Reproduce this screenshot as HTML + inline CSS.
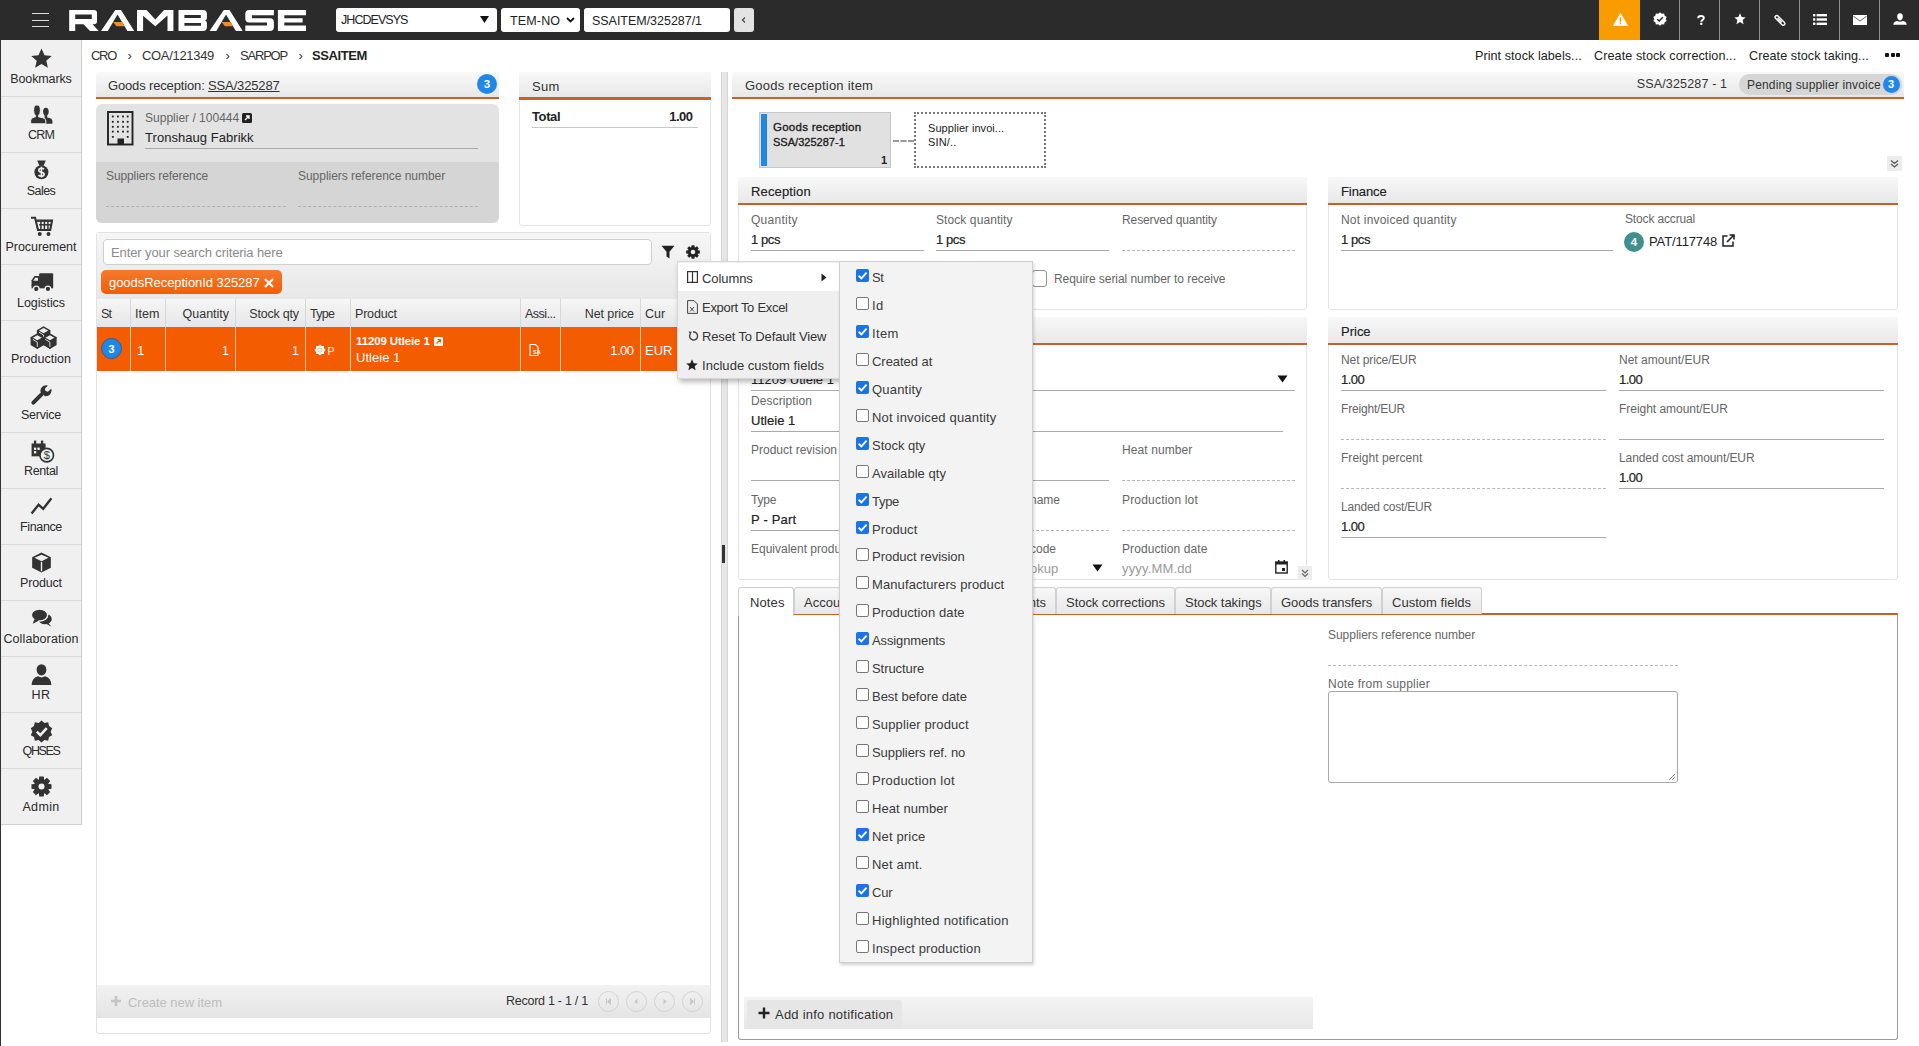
<!DOCTYPE html><html><head><meta charset="utf-8"><style>
html,body{margin:0;padding:0;width:1919px;height:1046px;overflow:hidden;background:#fff;font-family:"Liberation Sans",sans-serif;}
.a{position:absolute;box-sizing:border-box;}
.t{position:absolute;white-space:nowrap;}
svg.a{overflow:visible;}
</style></head><body>
<div class="a" style="left:0px;top:0px;width:1919px;height:40px;background:#2b2b2b;"></div>
<div class="a" style="left:32px;top:13px;width:17px;height:1.4px;background:#dcdcdc;"></div>
<div class="a" style="left:32px;top:19.5px;width:17px;height:1.4px;background:#dcdcdc;"></div>
<div class="a" style="left:32px;top:26px;width:17px;height:1.4px;background:#dcdcdc;"></div>
<svg class="a" style="left:0px;top:0px;" width="320" height="40" viewBox="0 0 320 40"><g fill="#fff" fill-rule="evenodd">
<path d="M69.2,31 V10 H94 Q97,10 97,13 V21 Q97,24.3 94,24.3 H92.5 L98.7,31 H90 L83.5,24.3 H75.2 V31 Z M75.2,14.6 H91.8 V18.9 H75.2 Z"/>
<path d="M101,31 L115.3,10 H121 L134.2,31 H127.4 L117.5,14.6 L107.8,31 Z"/>
<path d="M137,31 V10 H146.5 L155.3,19.5 L164,10 H173.4 V31 H167.5 V15.5 L155.3,26.2 L143.1,15.8 V31 Z"/>
<path d="M178.5,10 H203 Q206.9,10 206.9,14 V17.5 Q206.9,20.5 204.5,20.5 Q206.9,20.5 206.9,23.5 V27 Q206.9,31 203,31 H178.5 Z M184.4,15.1 H200.8 V18 H184.4 Z M184.4,23.1 H201 V25.7 H184.4 Z"/>
<path d="M209.5,31 L223.8,10 H229.5 L242.7,31 H235.9 L226,14.6 L216.3,31 Z"/>
<path d="M273.9,10 V15.2 H251.9 V18.3 H270 Q273.9,18.3 273.9,22.3 V27 Q273.9,31 270,31 H245.3 V25.6 H267 V22.6 H249.3 Q245.3,22.6 245.3,18.6 V14 Q245.3,10 249.3,10 Z"/>
<path d="M277.9,10 H306 V15.2 H284.3 V18.3 H302.6 V22.6 H284.3 V25.6 H306 V31 H277.9 Z"/>
</g>
<path d="M113.1,22 H122 L124.6,26.3 H116.4 Z" fill="#f08b2a"/>
<path d="M221.6,22 H230.5 L233.1,26.3 H224.9 Z" fill="#f08b2a"/>
</svg>
<div class="a" style="left:336px;top:8px;width:161px;height:24px;background:#fff;border-radius:3px;"></div>
<div class="t" style="left:341.0px;top:14.4px;font-size:12.5px;line-height:12.5px;color:#222;font-weight:normal;letter-spacing:-0.946px;">JHCDEVSYS</div>
<svg class="a" style="left:480px;top:16px;" width="9" height="7" viewBox="0 0 9 7"><path d="M0,0 H9 L4.5,7 Z" fill="#111"/></svg>
<div class="a" style="left:501px;top:8px;width:79px;height:24px;background:#fff;border-radius:3px;"></div>
<div class="t" style="left:510.0px;top:14.9px;font-size:12.5px;line-height:12.5px;color:#222;font-weight:normal;letter-spacing:0.151px;">TEM-NO</div>
<svg class="a" style="left:566px;top:17px;" width="9" height="6" viewBox="0 0 9 6"><path d="M1,1 L4.5,4.5 L8,1" fill="none" stroke="#111" stroke-width="1.8"/></svg>
<div class="a" style="left:584px;top:8px;width:146px;height:24px;background:#fff;border-radius:3px;"></div>
<div class="t" style="left:592.0px;top:14.9px;font-size:12.5px;line-height:12.5px;color:#222;font-weight:normal;letter-spacing:-0.028px;">SSAITEM/325287/1</div>
<div class="a" style="left:734px;top:8px;width:20px;height:24px;background:#e3e3e3;border-radius:3px;"></div>
<svg class="a" style="left:741px;top:17px;" width="6" height="6" viewBox="0 0 6 6"><path d="M4,0.5 L1.5,3 L4,5.5" fill="none" stroke="#444" stroke-width="1.2"/></svg>
<div class="a" style="left:1599px;top:0px;width:41px;height:40px;background:#f89c00;"></div>
<div class="a" style="left:1679px;top:0px;width:1px;height:40px;background:#8f8f8f;"></div>
<div class="a" style="left:1719px;top:0px;width:1px;height:40px;background:#8f8f8f;"></div>
<div class="a" style="left:1759px;top:0px;width:1px;height:40px;background:#8f8f8f;"></div>
<div class="a" style="left:1799px;top:0px;width:1px;height:40px;background:#8f8f8f;"></div>
<div class="a" style="left:1839px;top:0px;width:1px;height:40px;background:#8f8f8f;"></div>
<div class="a" style="left:1879px;top:0px;width:1px;height:40px;background:#8f8f8f;"></div>
<svg class="a" style="left:1612.5px;top:12.5px;" width="15" height="13" viewBox="0 0 15 13"><path d="M7.5,0.5 L14.5,12.5 H0.5 Z" fill="#fff" stroke="#fff" stroke-width="0.8" stroke-linejoin="round"/><rect x="6.7" y="4.3" width="1.6" height="4.4" fill="#f89c00"/><rect x="6.7" y="9.6" width="1.6" height="1.6" fill="#f89c00"/></svg>
<svg class="a" style="left:1653px;top:12px;" width="14" height="14" viewBox="0 0 14 14"><path d="M7,0.3 L8.8,1.8 L11.1,1.5 L11.7,3.7 L13.7,5 L12.7,7 L13.7,9 L11.7,10.3 L11.1,12.5 L8.8,12.2 L7,13.7 L5.2,12.2 L2.9,12.5 L2.3,10.3 L0.3,9 L1.3,7 L0.3,5 L2.3,3.7 L2.9,1.5 L5.2,1.8 Z" fill="#fff"/><path d="M4.2,7.2 L6.2,9 L9.8,5.2" fill="none" stroke="#2b2b2b" stroke-width="1.5"/></svg>
<svg class="a" style="left:1696.5px;top:14.5px;" width="8" height="10" viewBox="0 0 8 10"><path d="M1.2,3.2 Q1.2,0.9 4,0.9 Q6.8,0.9 6.8,3.1 Q6.8,4.5 5.1,5.3 Q4.3,5.8 4.3,6.8" fill="none" stroke="#fff" stroke-width="2"/><rect x="3.2" y="7.7" width="2.2" height="2.2" fill="#fff"/></svg>
<svg class="a" style="left:1734px;top:13px;" width="12" height="12" viewBox="0 0 12 12"><path d="M6,0.3 L7.7,4 L11.7,4.4 L8.6,7.1 L9.6,11.2 L6,9.1 L2.4,11.2 L3.4,7.1 L0.3,4.4 L4.3,4 Z" fill="#fff"/></svg>
<svg class="a" style="left:1773.5px;top:13.5px;" width="12" height="12" viewBox="0 0 12 12"><path d="M10.2,8.2 L4.2,2.2 Q2.8,0.8 1.6,2 Q0.4,3.2 1.8,4.6 L7.8,10.6 Q9.2,12 10.4,10.8 Q11.6,9.6 10.2,8.2 Z M7.8,8.3 L3.6,4.1" fill="none" stroke="#fff" stroke-width="1.4"/></svg>
<svg class="a" style="left:1813px;top:14px;" width="14" height="11" viewBox="0 0 14 11"><rect x="0" y="0" width="2.4" height="2.4" rx="0.6" fill="#fff"/><rect x="0" y="4.3" width="2.4" height="2.4" rx="0.6" fill="#fff"/><rect x="0" y="8.6" width="2.4" height="2.4" rx="0.6" fill="#fff"/><rect x="3.6" y="0" width="10.4" height="2.4" fill="#fff"/><rect x="3.6" y="4.3" width="10.4" height="2.4" fill="#fff"/><rect x="3.6" y="8.6" width="10.4" height="2.4" fill="#fff"/></svg>
<svg class="a" style="left:1853px;top:15px;" width="14" height="10" viewBox="0 0 14 10"><rect x="0" y="0" width="14" height="10" fill="#fff"/><path d="M0.3,1.2 L7,6 L13.7,1.2" fill="none" stroke="#2b2b2b" stroke-width="0.7"/></svg>
<svg class="a" style="left:1893px;top:13px;" width="14" height="12" viewBox="0 0 14 12"><path d="M7,0.3 Q9.8,0.3 9.8,3.6 Q9.8,6.8 7,7.6 Q4.2,6.8 4.2,3.6 Q4.2,0.3 7,0.3 Z" fill="#fff"/><path d="M0.2,11.8 Q0.5,8.6 3.8,7.9 L7,8.8 L10.2,7.9 Q13.5,8.6 13.8,11.8 Z" fill="#fff"/></svg>
<div class="a" style="left:0px;top:40px;width:1px;height:1006px;background:#333;"></div>
<div class="a" style="left:1px;top:40px;width:81px;height:785px;background:#f1f0f0;border-right:1px solid #cfcfcf;border-bottom:1px solid #cfcfcf;"></div>
<svg class="a" style="left:30.5px;top:47.5px;" width="21" height="21" viewBox="0 0 18 18"><path d="M9,0.5 L11.6,6.3 L17.8,6.8 L13.1,10.9 L14.5,17 L9,13.8 L3.5,17 L4.9,10.9 L0.2,6.8 L6.4,6.3 Z" fill="#333"/></svg>
<div class="t" style="left:-259.0px;width:600px;text-align:center;top:72.9px;font-size:12.5px;line-height:12.5px;color:#2a2a2a;font-weight:normal;letter-spacing:-0.108px;">Bookmarks</div>
<div class="a" style="left:1px;top:96px;width:80px;height:1px;background:#dadada;"></div>
<svg class="a" style="left:0px;top:0px;" width="80" height="200" viewBox="0 0 80 200"><ellipse cx="45.9" cy="111.6" rx="2.8" ry="3.9" fill="#333"/><rect x="44.6" y="114.5" width="2.6" height="3.5" fill="#333"/><path d="M45,123.8 V119 Q45.5,117.5 47.5,117.6 Q52.4,118.2 52.4,121 V123.8 Z" fill="#333"/><path d="M30.7,123.8 V120.5 Q30.9,117.6 34.3,117.1 L35.5,116.8 V115.6 Q33.6,114 33.6,110.2 Q33.6,104.9 37,104.9 Q40.4,104.9 40.4,110.2 Q40.4,114 38.5,115.6 V116.8 L39.7,117.1 Q45.8,117.8 45.8,121 V123.8 Z" fill="#333" stroke="#f1f0f0" stroke-width="1"/></svg>
<div class="t" style="left:-259.0px;width:600px;text-align:center;top:128.9px;font-size:12.5px;line-height:12.5px;color:#2a2a2a;font-weight:normal;letter-spacing:-0.808px;">CRM</div>
<div class="a" style="left:1px;top:152px;width:80px;height:1px;background:#dadada;"></div>
<svg class="a" style="left:0px;top:0px;" width="80" height="200" viewBox="0 0 80 200"><path d="M37.2,160.5 H45.8 L43.6,165.8 H39.4 Z" fill="#333"/><circle cx="41.4" cy="172.2" r="7" fill="#333"/><path d="M44,169.3 Q43.2,168.2 41.4,168.2 Q38.8,168.2 38.8,170.2 Q38.8,171.8 41.4,172.2 Q44.1,172.6 44.1,174.3 Q44.1,176.3 41.4,176.3 Q39.4,176.3 38.6,175 M41.4,166.8 V177.6" fill="none" stroke="#f1f0f0" stroke-width="1.6"/></svg>
<div class="t" style="left:-259.0px;width:600px;text-align:center;top:184.9px;font-size:12.5px;line-height:12.5px;color:#2a2a2a;font-weight:normal;letter-spacing:-0.529px;">Sales</div>
<div class="a" style="left:1px;top:208px;width:80px;height:1px;background:#dadada;"></div>
<svg class="a" style="left:30.5px;top:215.5px;" width="21" height="21" viewBox="0 0 18 18"><path d="M0,1.5 H3.5 L6,12 H16.5 L18,4 H5" fill="none" stroke="#333" stroke-width="1.8"/><path d="M5,4 H18 M7,7.5 H17 M8.5,4 V12 M11.5,4 V12 M14.5,4 V12" stroke="#333" stroke-width="1.3"/><circle cx="7.5" cy="15.5" r="1.7" fill="#333"/><circle cx="15" cy="15.5" r="1.7" fill="#333"/></svg>
<div class="t" style="left:-259.0px;width:600px;text-align:center;top:240.9px;font-size:12.5px;line-height:12.5px;color:#2a2a2a;font-weight:normal;letter-spacing:-0.070px;">Procurement</div>
<div class="a" style="left:1px;top:264px;width:80px;height:1px;background:#dadada;"></div>
<svg class="a" style="left:30.5px;top:271.5px;" width="21" height="21" viewBox="0 0 18 18"><rect x="7" y="1" width="12" height="11" rx="1" fill="#333"/><path d="M0.5,12 V7 L3,3.5 H7.5 V12 Z" fill="#333"/><rect x="0.5" y="11" width="18.5" height="3" fill="#333"/><circle cx="4.5" cy="14.5" r="2.4" fill="#333" stroke="#f1f0f0" stroke-width="1.2"/><circle cx="14.5" cy="14.5" r="2.4" fill="#333" stroke="#f1f0f0" stroke-width="1.2"/><path d="M2,7.5 L3.5,5 H6 V7.5 Z" fill="#f1f0f0"/></svg>
<div class="t" style="left:-259.0px;width:600px;text-align:center;top:296.9px;font-size:12.5px;line-height:12.5px;color:#2a2a2a;font-weight:normal;letter-spacing:-0.098px;">Logistics</div>
<div class="a" style="left:1px;top:320px;width:80px;height:1px;background:#dadada;"></div>
<svg class="a" style="left:0px;top:0px;" width="80" height="400" viewBox="0 0 80 400"><polygon points="37.538000000000004,330.6 43.6,334.1 43.6,341.1 37.538000000000004,337.6" fill="#333" stroke="#333" stroke-width="1.3" stroke-linejoin="round"/><polygon points="43.6,334.1 49.662,330.6 49.662,337.6 43.6,341.1" fill="#333" stroke="#333" stroke-width="1.3" stroke-linejoin="round"/><polygon points="43.6,327.1 49.662,330.6 43.6,334.1 37.538000000000004,330.6" fill="#f1f0f0" stroke="#333" stroke-width="1.6" stroke-linejoin="round"/><polyline points="39.038000000000004,332.20000000000005 43.6,335.0 43.6,339.6" fill="none" stroke="#f1f0f0" stroke-width="0.9"/><polygon points="31.237999999999996,337.8 37.3,341.3 37.3,348.3 31.237999999999996,344.8" fill="#333" stroke="#333" stroke-width="1.3" stroke-linejoin="round"/><polygon points="37.3,341.3 43.361999999999995,337.8 43.361999999999995,344.8 37.3,348.3" fill="#333" stroke="#333" stroke-width="1.3" stroke-linejoin="round"/><polygon points="37.3,334.3 43.361999999999995,337.8 37.3,341.3 31.237999999999996,337.8" fill="#f1f0f0" stroke="#333" stroke-width="1.6" stroke-linejoin="round"/><polyline points="32.738,339.40000000000003 37.3,342.2 37.3,346.8" fill="none" stroke="#f1f0f0" stroke-width="0.9"/><polygon points="43.838,337.8 49.9,341.3 49.9,348.3 43.838,344.8" fill="#333" stroke="#333" stroke-width="1.3" stroke-linejoin="round"/><polygon points="49.9,341.3 55.961999999999996,337.8 55.961999999999996,344.8 49.9,348.3" fill="#333" stroke="#333" stroke-width="1.3" stroke-linejoin="round"/><polygon points="49.9,334.3 55.961999999999996,337.8 49.9,341.3 43.838,337.8" fill="#f1f0f0" stroke="#333" stroke-width="1.6" stroke-linejoin="round"/><polyline points="45.338,339.40000000000003 49.9,342.2 49.9,346.8" fill="none" stroke="#f1f0f0" stroke-width="0.9"/></svg>
<div class="t" style="left:-259.0px;width:600px;text-align:center;top:352.9px;font-size:12.5px;line-height:12.5px;color:#2a2a2a;font-weight:normal;letter-spacing:0.044px;">Production</div>
<div class="a" style="left:1px;top:376px;width:80px;height:1px;background:#dadada;"></div>
<svg class="a" style="left:30.5px;top:383.5px;" width="21" height="21" viewBox="0 0 18 18"><path d="M2,16 L9.5,8.5" stroke="#333" stroke-width="3.4" stroke-linecap="round"/><path d="M8,6.5 Q8,1.5 13,1 L14.5,1.2 L11.8,4 L12.5,6 L14.5,6.7 L17.3,4 Q17.8,5 17.6,6 Q17,10.5 12,10.5 Z" fill="#333"/></svg>
<div class="t" style="left:-259.0px;width:600px;text-align:center;top:408.9px;font-size:12.5px;line-height:12.5px;color:#2a2a2a;font-weight:normal;letter-spacing:-0.238px;">Service</div>
<div class="a" style="left:1px;top:432px;width:80px;height:1px;background:#dadada;"></div>
<svg class="a" style="left:30.5px;top:439.5px;" width="21" height="21" viewBox="0 0 18 18"><rect x="0.5" y="3" width="12" height="11" fill="#333"/><rect x="2.5" y="0.5" width="2" height="3.5" fill="#333"/><rect x="8.5" y="0.5" width="2" height="3.5" fill="#333"/><g fill="#f1f0f0"><rect x="2.5" y="6.5" width="2" height="2"/><rect x="5.5" y="6.5" width="2" height="2"/><rect x="2.5" y="9.5" width="2" height="2"/></g><circle cx="13.5" cy="13" r="5.8" fill="#f1f0f0" stroke="#333" stroke-width="1.4"/><text x="13.5" y="16.6" font-size="9.5" font-family="Liberation Sans" text-anchor="middle" fill="#333">$</text></svg>
<div class="t" style="left:-259.0px;width:600px;text-align:center;top:464.9px;font-size:12.5px;line-height:12.5px;color:#2a2a2a;font-weight:normal;letter-spacing:-0.336px;">Rental</div>
<div class="a" style="left:1px;top:488px;width:80px;height:1px;background:#dadada;"></div>
<svg class="a" style="left:30.5px;top:495.5px;" width="21" height="21" viewBox="0 0 18 18"><path d="M0.5,15 L6.5,7.5 L10.5,11 L17.5,2" fill="none" stroke="#333" stroke-width="2"/></svg>
<div class="t" style="left:-259.0px;width:600px;text-align:center;top:520.9px;font-size:12.5px;line-height:12.5px;color:#2a2a2a;font-weight:normal;letter-spacing:-0.369px;">Finance</div>
<div class="a" style="left:1px;top:544px;width:80px;height:1px;background:#dadada;"></div>
<svg class="a" style="left:30.5px;top:551.5px;" width="21" height="21" viewBox="0 0 18 18"><path d="M9,0.5 L17,4.5 V13.5 L9,17.5 L1,13.5 V4.5 Z" fill="#333"/><path d="M3,5 L9,8 L15,5 L9,2.3 Z" fill="#f1f0f0"/><path d="M9,8.5 V16.5" stroke="#f1f0f0" stroke-width="1.2"/></svg>
<div class="t" style="left:-259.0px;width:600px;text-align:center;top:576.9px;font-size:12.5px;line-height:12.5px;color:#2a2a2a;font-weight:normal;letter-spacing:-0.188px;">Product</div>
<div class="a" style="left:1px;top:600px;width:80px;height:1px;background:#dadada;"></div>
<svg class="a" style="left:30.5px;top:607.5px;" width="21" height="21" viewBox="0 0 18 18"><ellipse cx="12" cy="9.5" rx="5.8" ry="4.5" fill="#333"/><path d="M14.5,12.5 L17.5,16 L13,13.5 Z" fill="#333"/><ellipse cx="7.3" cy="6" rx="7" ry="5.2" fill="#333" stroke="#f1f0f0" stroke-width="1.2"/><path d="M3,9.5 L1.5,13.5 L7,10.8 Z" fill="#333"/></svg>
<div class="t" style="left:-259.0px;width:600px;text-align:center;top:632.9px;font-size:12.5px;line-height:12.5px;color:#2a2a2a;font-weight:normal;letter-spacing:0.116px;">Collaboration</div>
<div class="a" style="left:1px;top:656px;width:80px;height:1px;background:#dadada;"></div>
<svg class="a" style="left:30.5px;top:663.5px;" width="21" height="21" viewBox="0 0 18 18"><ellipse cx="9" cy="5" rx="4.2" ry="4.8" fill="#333"/><path d="M0.5,18 Q1,11.5 6,10.5 L9,11.5 L12,10.5 Q17,11.5 17.5,18 Z" fill="#333"/></svg>
<div class="t" style="left:-259.0px;width:600px;text-align:center;top:688.9px;font-size:12.5px;line-height:12.5px;color:#2a2a2a;font-weight:normal;letter-spacing:0.395px;">HR</div>
<div class="a" style="left:1px;top:712px;width:80px;height:1px;background:#dadada;"></div>
<svg class="a" style="left:30.5px;top:719.5px;" width="21" height="21" viewBox="0 0 18 18"><path d="M9,0.5 L11.5,2.5 L14.7,2 L15.5,5.2 L18.2,7 L16.8,10 L18.2,13 L15.4,14.5 L14.7,17.8 L11.5,17.2 L9,19.3 L6.5,17.2 L3.3,17.8 L2.6,14.5 L-0.2,13 L1.2,10 L-0.2,7 L2.5,5.2 L3.3,2 L6.5,2.5 Z" fill="#333"/><path d="M5,10 L8,13 L13.5,7" fill="none" stroke="#f1f0f0" stroke-width="2.2"/></svg>
<div class="t" style="left:-259.0px;width:600px;text-align:center;top:744.9px;font-size:12.5px;line-height:12.5px;color:#2a2a2a;font-weight:normal;letter-spacing:-1.378px;">QHSES</div>
<div class="a" style="left:1px;top:768px;width:80px;height:1px;background:#dadada;"></div>
<svg class="a" style="left:30.5px;top:775.5px;" width="21" height="21" viewBox="0 0 18 18"><g transform="translate(9,9)"><polygon points="8.59,-1.92 8.59,1.92 5.99,2.25 5.83,2.64 7.43,4.71 4.71,7.43 2.64,5.83 2.25,5.99 1.92,8.59 -1.92,8.59 -2.25,5.99 -2.64,5.83 -4.71,7.43 -7.43,4.71 -5.83,2.64 -5.99,2.25 -8.59,1.92 -8.59,-1.92 -5.99,-2.25 -5.83,-2.64 -7.43,-4.71 -4.71,-7.43 -2.64,-5.83 -2.25,-5.99 -1.92,-8.59 1.92,-8.59 2.25,-5.99 2.64,-5.83 4.71,-7.43 7.43,-4.71 5.83,-2.64 5.99,-2.25" fill="#333"/><circle r="2.6" fill="#f1f0f0"/></g></svg>
<div class="t" style="left:-259.0px;width:600px;text-align:center;top:800.9px;font-size:12.5px;line-height:12.5px;color:#2a2a2a;font-weight:normal;letter-spacing:0.355px;">Admin</div>
<div class="t" style="left:91.0px;top:49.0px;font-size:13px;line-height:13px;color:#333;font-weight:normal;letter-spacing:-1.296px;">CRO</div>
<div class="t" style="left:127.5px;top:49.0px;font-size:13px;line-height:13px;color:#333;font-weight:normal;">›</div>
<div class="t" style="left:142.0px;top:49.0px;font-size:13px;line-height:13px;color:#333;font-weight:normal;letter-spacing:-0.316px;">COA/121349</div>
<div class="t" style="left:225.5px;top:49.0px;font-size:13px;line-height:13px;color:#333;font-weight:normal;">›</div>
<div class="t" style="left:240.0px;top:49.0px;font-size:13px;line-height:13px;color:#333;font-weight:normal;letter-spacing:-1.198px;">SARPOP</div>
<div class="t" style="left:298.5px;top:49.0px;font-size:13px;line-height:13px;color:#333;font-weight:normal;">›</div>
<div class="t" style="left:312.0px;top:49.0px;font-size:13px;line-height:13px;color:#222;font-weight:bold;letter-spacing:-0.398px;">SSAITEM</div>
<div class="t" style="left:1475.0px;top:50.3px;font-size:12.6px;line-height:12.6px;color:#222;font-weight:normal;letter-spacing:0.051px;">Print stock labels...</div>
<div class="t" style="left:1594.0px;top:50.3px;font-size:12.6px;line-height:12.6px;color:#222;font-weight:normal;letter-spacing:0.089px;">Create stock correction...</div>
<div class="t" style="left:1749.0px;top:50.3px;font-size:12.6px;line-height:12.6px;color:#222;font-weight:normal;letter-spacing:0.067px;">Create stock taking...</div>
<div class="a" style="left:1885.0px;top:53px;width:4px;height:4px;background:#111;border-radius:1px;"></div>
<div class="a" style="left:1890.5px;top:53px;width:4px;height:4px;background:#111;border-radius:1px;"></div>
<div class="a" style="left:1896.0px;top:53px;width:4px;height:4px;background:#111;border-radius:1px;"></div>
<div class="a" style="left:96px;top:72px;width:403px;height:25px;background:linear-gradient(#f8f8f8,#e9e8e8);border-radius:3px 3px 0 0;"></div>
<div class="a" style="left:96px;top:97px;width:403px;height:2px;background:#c5622b;"></div>
<div class="t" style="left:108.0px;top:79.0px;font-size:13px;line-height:13px;color:#333;font-weight:normal;letter-spacing:-0.15px;">Goods reception: <span style="text-decoration:underline;">SSA/325287</span></div>
<div class="a" style="left:477px;top:74px;width:20px;height:20px;background:#1f87e6;border-radius:50%;"></div>
<div class="t" style="left:187.0px;width:600px;text-align:center;top:79.3px;font-size:11.5px;line-height:11.5px;color:#fff;font-weight:bold;">3</div>
<div class="a" style="left:96px;top:104px;width:403px;height:119px;background:#e3e3e3;border-radius:6px;overflow:hidden;"></div>
<div class="a" style="left:96px;top:162px;width:403px;height:61px;background:#d5d5d5;border-radius:0 0 6px 6px;"></div>
<svg class="a" style="left:107px;top:111px;" width="27" height="35" viewBox="0 0 27 35"><rect x="1" y="1" width="24.5" height="32.5" fill="none" stroke="#222" stroke-width="1.9"/><rect x="4.8999999999999995" y="4.6" width="1.8" height="1.8" fill="#222"/><rect x="4.8999999999999995" y="9.9" width="1.8" height="1.8" fill="#222"/><rect x="4.8999999999999995" y="14.9" width="1.8" height="1.8" fill="#222"/><rect x="4.8999999999999995" y="19.700000000000003" width="1.8" height="1.8" fill="#222"/><rect x="10.0" y="4.6" width="1.8" height="1.8" fill="#222"/><rect x="10.0" y="9.9" width="1.8" height="1.8" fill="#222"/><rect x="10.0" y="14.9" width="1.8" height="1.8" fill="#222"/><rect x="10.0" y="19.700000000000003" width="1.8" height="1.8" fill="#222"/><rect x="15.1" y="4.6" width="1.8" height="1.8" fill="#222"/><rect x="15.1" y="9.9" width="1.8" height="1.8" fill="#222"/><rect x="15.1" y="14.9" width="1.8" height="1.8" fill="#222"/><rect x="15.1" y="19.700000000000003" width="1.8" height="1.8" fill="#222"/><rect x="19.8" y="4.6" width="1.8" height="1.8" fill="#222"/><rect x="19.8" y="9.9" width="1.8" height="1.8" fill="#222"/><rect x="19.8" y="14.9" width="1.8" height="1.8" fill="#222"/><rect x="19.8" y="19.700000000000003" width="1.8" height="1.8" fill="#222"/><rect x="4.8999999999999995" y="25.0" width="1.8" height="1.8" fill="#222"/><rect x="19.8" y="25.0" width="1.8" height="1.8" fill="#222"/><rect x="10.5" y="27.5" width="6.5" height="6" fill="#222"/></svg>
<div class="t" style="left:145.0px;top:111.8px;font-size:12px;line-height:12px;color:#666;font-weight:normal;letter-spacing:0.008px;">Supplier / 100444</div>
<svg class="a" style="left:242px;top:113px;" width="10" height="10" viewBox="0 0 10 10"><rect x="0" y="0" width="10" height="10" rx="1.5" fill="#222"/><path d="M3,7 L7,3 M4,3 H7 V6" fill="none" stroke="#fff" stroke-width="1.3"/></svg>
<div class="t" style="left:145.0px;top:131.0px;font-size:13px;line-height:13px;color:#222;font-weight:normal;letter-spacing:0.044px;">Tronshaug Fabrikk</div>
<div class="a" style="left:145px;top:148px;width:333px;height:1px;background:#a8a8a8;"></div>
<div class="t" style="left:106.0px;top:169.8px;font-size:12px;line-height:12px;color:#666;font-weight:normal;letter-spacing:-0.103px;">Suppliers reference</div>
<div class="t" style="left:298.0px;top:169.8px;font-size:12px;line-height:12px;color:#666;font-weight:normal;letter-spacing:-0.035px;">Suppliers reference number</div>
<div class="a" style="left:106px;top:206px;width:180px;height:1px;border-top:1px dashed #b0b0b0;"></div>
<div class="a" style="left:298px;top:206px;width:180px;height:1px;border-top:1px dashed #b0b0b0;"></div>
<div class="a" style="left:519px;top:72px;width:192px;height:154px;border:1px solid #e4e4e4;border-radius:3px;background:#fff;"></div>
<div class="a" style="left:519px;top:72px;width:192px;height:25px;background:linear-gradient(#f8f8f8,#e9e8e8);border-radius:3px 3px 0 0;"></div>
<div class="a" style="left:519px;top:97px;width:192px;height:3px;background:#c5622b;"></div>
<div class="t" style="left:532.0px;top:80.0px;font-size:13px;line-height:13px;color:#333;font-weight:normal;letter-spacing:0.285px;">Sum</div>
<div class="t" style="left:532.0px;top:110.0px;font-size:13px;line-height:13px;color:#222;font-weight:bold;letter-spacing:-0.396px;">Total</div>
<div class="t" style="left:92.5px;width:600px;text-align:right;top:110.0px;font-size:13px;line-height:13px;color:#222;font-weight:bold;letter-spacing:-0.500px;">1.00</div>
<div class="a" style="left:532px;top:127px;width:166px;height:1px;background:#c8c8c8;"></div>
<div class="a" style="left:721px;top:72px;width:7px;height:970px;background:#e6e6e6;border-left:1px solid #d6d6d6;border-right:1px solid #d6d6d6;"></div>
<div class="a" style="left:722px;top:545px;width:3px;height:18px;background:#333;"></div>
<div class="a" style="left:96px;top:232px;width:615px;height:802px;border:1px solid #e2e2e2;border-radius:3px;background:#fff;"></div>
<div class="a" style="left:97px;top:233px;width:613px;height:66px;background:linear-gradient(#f6f6f6,#e8e8e8);"></div>
<div class="a" style="left:103px;top:239px;width:549px;height:26px;background:#fff;border:1px solid #cfcfcf;border-radius:4px;"></div>
<div class="t" style="left:111.0px;top:246.0px;font-size:13px;line-height:13px;color:#8a8a8a;font-weight:normal;letter-spacing:-0.105px;">Enter your search criteria here</div>
<svg class="a" style="left:661px;top:245px;" width="14" height="14" viewBox="0 0 14 14"><path d="M0.5,0.8 H13.5 L8.5,6.8 V13.5 L5.5,11.5 V6.8 Z" fill="#222"/></svg>
<svg class="a" style="left:686px;top:245px;" width="14" height="14" viewBox="0 0 14 14"><g transform="translate(7,7)"><polygon points="-1.39,-6.86 1.39,-6.86 1.70,-4.81 2.20,-4.60 3.87,-5.83 5.83,-3.87 4.60,-2.20 4.81,-1.70 6.86,-1.39 6.86,1.39 4.81,1.70 4.60,2.20 5.83,3.87 3.87,5.83 2.20,4.60 1.70,4.81 1.39,6.86 -1.39,6.86 -1.70,4.81 -2.20,4.60 -3.87,5.83 -5.83,3.87 -4.60,2.20 -4.81,1.70 -6.86,1.39 -6.86,-1.39 -4.81,-1.70 -4.60,-2.20 -5.83,-3.87 -3.87,-5.83 -2.20,-4.60 -1.70,-4.81" fill="#222"/><circle r="2.3" fill="#ececec"/></g></svg>
<div class="a" style="left:101px;top:270px;width:181px;height:24px;background:linear-gradient(#f47a2c,#f25f06);border-radius:5px;"></div>
<div class="t" style="left:109.0px;top:276.0px;font-size:13px;line-height:13px;color:#fff;font-weight:normal;letter-spacing:-0.049px;">goodsReceptionId 325287</div>
<svg class="a" style="left:264px;top:278px;" width="10" height="10" viewBox="0 0 10 10"><path d="M1,1 L9,9 M9,1 L1,9" stroke="#fff" stroke-width="2.2"/></svg>
<div class="a" style="left:97px;top:299px;width:613px;height:28px;background:linear-gradient(#f6f6f6,#e6e6e6);"></div>
<div class="a" style="left:130px;top:299px;width:1px;height:28px;background:#d8d8d8;"></div>
<div class="a" style="left:165px;top:299px;width:1px;height:28px;background:#d8d8d8;"></div>
<div class="a" style="left:235px;top:299px;width:1px;height:28px;background:#d8d8d8;"></div>
<div class="a" style="left:305px;top:299px;width:1px;height:28px;background:#d8d8d8;"></div>
<div class="a" style="left:350px;top:299px;width:1px;height:28px;background:#d8d8d8;"></div>
<div class="a" style="left:520px;top:299px;width:1px;height:28px;background:#d8d8d8;"></div>
<div class="a" style="left:560px;top:299px;width:1px;height:28px;background:#d8d8d8;"></div>
<div class="a" style="left:640px;top:299px;width:1px;height:28px;background:#d8d8d8;"></div>
<div class="t" style="left:101.0px;top:308.4px;font-size:12.5px;line-height:12.5px;color:#333;font-weight:normal;letter-spacing:-0.861px;">St</div>
<div class="t" style="left:135.0px;top:308.4px;font-size:12.5px;line-height:12.5px;color:#333;font-weight:normal;letter-spacing:0.014px;">Item</div>
<div class="t" style="left:-371.0px;width:600px;text-align:right;top:308.4px;font-size:12.5px;line-height:12.5px;color:#333;font-weight:normal;letter-spacing:-0.014px;">Quantity</div>
<div class="t" style="left:-301.2px;width:600px;text-align:right;top:308.4px;font-size:12.5px;line-height:12.5px;color:#333;font-weight:normal;letter-spacing:-0.207px;">Stock qty</div>
<div class="t" style="left:310.0px;top:308.4px;font-size:12.5px;line-height:12.5px;color:#333;font-weight:normal;letter-spacing:-0.683px;">Type</div>
<div class="t" style="left:355.0px;top:308.4px;font-size:12.5px;line-height:12.5px;color:#333;font-weight:normal;letter-spacing:-0.188px;">Product</div>
<div class="t" style="left:525.0px;top:308.4px;font-size:12.5px;line-height:12.5px;color:#333;font-weight:normal;letter-spacing:-0.497px;">Assi...</div>
<div class="t" style="left:33.9px;width:600px;text-align:right;top:308.4px;font-size:12.5px;line-height:12.5px;color:#333;font-weight:normal;letter-spacing:-0.108px;">Net price</div>
<div class="t" style="left:645.0px;top:308.4px;font-size:12.5px;line-height:12.5px;color:#333;font-weight:normal;letter-spacing:-0.045px;">Cur</div>
<div class="a" style="left:97px;top:327px;width:613px;height:44px;background:#f45c02;"></div>
<div class="a" style="left:130px;top:327px;width:1px;height:44px;background:#fbc79a;"></div>
<div class="a" style="left:165px;top:327px;width:1px;height:44px;background:#fbc79a;"></div>
<div class="a" style="left:235px;top:327px;width:1px;height:44px;background:#fbc79a;"></div>
<div class="a" style="left:305px;top:327px;width:1px;height:44px;background:#fbc79a;"></div>
<div class="a" style="left:350px;top:327px;width:1px;height:44px;background:#fbc79a;"></div>
<div class="a" style="left:520px;top:327px;width:1px;height:44px;background:#fbc79a;"></div>
<div class="a" style="left:560px;top:327px;width:1px;height:44px;background:#fbc79a;"></div>
<div class="a" style="left:640px;top:327px;width:1px;height:44px;background:#fbc79a;"></div>
<div class="a" style="left:101px;top:338px;width:21px;height:21px;background:#1f87e6;border-radius:50%;border:1px solid #2a5d9a;"></div>
<div class="t" style="left:-188.5px;width:600px;text-align:center;top:344.3px;font-size:11.5px;line-height:11.5px;color:#fff;font-weight:bold;">3</div>
<div class="t" style="left:137.0px;top:344.0px;font-size:13px;line-height:13px;color:#fff;font-weight:normal;">1</div>
<div class="t" style="left:-371.0px;width:600px;text-align:right;top:344.0px;font-size:13px;line-height:13px;color:#fff;font-weight:normal;">1</div>
<div class="t" style="left:-301.0px;width:600px;text-align:right;top:344.0px;font-size:13px;line-height:13px;color:#fff;font-weight:normal;">1</div>
<svg class="a" style="left:313.6px;top:344.4px;" width="12" height="12" viewBox="0 0 12 12"><g transform="translate(6,6)"><polygon points="5.60,0.00 3.97,1.65 3.96,3.96 1.65,3.97 0.00,5.60 -1.65,3.97 -3.96,3.96 -3.97,1.65 -5.60,0.00 -3.97,-1.65 -3.96,-3.96 -1.65,-3.97 -0.00,-5.60 1.65,-3.97 3.96,-3.96 3.97,-1.65" fill="#fff"/><circle r="4.2" fill="#fff"/><circle r="2.1" fill="none" stroke="#d9a080" stroke-width="0.8"/></g></svg>
<div class="t" style="left:327.5px;top:346.1px;font-size:10.5px;line-height:10.5px;color:#fff;font-weight:normal;">P</div>
<div class="t" style="left:356.0px;top:336.3px;font-size:11.5px;line-height:11.5px;color:#fff;font-weight:bold;letter-spacing:-0.122px;">11209 Utleie 1</div>
<svg class="a" style="left:434px;top:337px;" width="9" height="9" viewBox="0 0 9 9"><rect x="0" y="0" width="9" height="9" rx="1" fill="#fff"/><path d="M2.5,6.5 L6.5,2.5 M3.5,2.5 H6.5 V5.5" fill="none" stroke="#f45c02" stroke-width="1.2"/></svg>
<div class="t" style="left:356.0px;top:351.0px;font-size:13px;line-height:13px;color:#fff;font-weight:normal;letter-spacing:0.032px;">Utleie 1</div>
<svg class="a" style="left:529px;top:344px;" width="12" height="12" viewBox="0 0 12 12"><path d="M1,0.5 H6.5 L9,3 V11.5 H1 Z" fill="none" stroke="#fff" stroke-width="1.1"/><text x="4" y="10" font-size="5.5" font-family="Liberation Sans" font-weight="bold" fill="#fff">SA</text></svg>
<div class="t" style="left:33.5px;width:600px;text-align:right;top:344.0px;font-size:13px;line-height:13px;color:#fff;font-weight:normal;letter-spacing:-0.500px;">1.00</div>
<div class="t" style="left:645.0px;top:344.0px;font-size:13px;line-height:13px;color:#fff;font-weight:normal;">EUR</div>
<div class="a" style="left:97px;top:985px;width:613px;height:33px;background:linear-gradient(#f2f2f2,#e4e4e4);"></div>
<svg class="a" style="left:110px;top:995px;" width="12" height="12" viewBox="0 0 12 12"><path d="M6,1 V11 M1,6 H11" stroke="#c4c4c4" stroke-width="2.6"/></svg>
<div class="t" style="left:128.0px;top:996.0px;font-size:13px;line-height:13px;color:#bdbdbd;font-weight:normal;letter-spacing:-0.046px;">Create new item</div>
<div class="t" style="left:506.0px;top:995.4px;font-size:12.5px;line-height:12.5px;color:#333;font-weight:normal;letter-spacing:-0.260px;">Record 1 - 1 / 1</div>
<svg class="a" style="left:597.8px;top:991px;" width="21" height="21" viewBox="0 0 21 21"><circle cx="10.5" cy="10.5" r="10" fill="none" stroke="#d2d2d2" stroke-width="1"/><g transform="translate(5.5,10.5)"><path d="M3,-3 V3 M7,-3 L4,0 L7,3 Z" stroke="#c8c8c8" fill="#c8c8c8" stroke-width="1"/></g></svg>
<svg class="a" style="left:626.2px;top:991px;" width="21" height="21" viewBox="0 0 21 21"><circle cx="10.5" cy="10.5" r="10" fill="none" stroke="#d2d2d2" stroke-width="1"/><g transform="translate(5.5,10.5)"><path d="M6,-3 L3,0 L6,3 Z" fill="#c8c8c8"/></g></svg>
<svg class="a" style="left:653.8px;top:991px;" width="21" height="21" viewBox="0 0 21 21"><circle cx="10.5" cy="10.5" r="10" fill="none" stroke="#d2d2d2" stroke-width="1"/><g transform="translate(5.5,10.5)"><path d="M4,-3 L7,0 L4,3 Z" fill="#c8c8c8"/></g></svg>
<svg class="a" style="left:682.2px;top:991px;" width="21" height="21" viewBox="0 0 21 21"><circle cx="10.5" cy="10.5" r="10" fill="none" stroke="#d2d2d2" stroke-width="1"/><g transform="translate(5.5,10.5)"><path d="M3,-3 L6,0 L3,3 Z M7,-3 V3" stroke="#c8c8c8" fill="#c8c8c8" stroke-width="1"/></g></svg>
<div class="a" style="left:732px;top:72px;width:1172px;height:25px;background:linear-gradient(#f8f8f8,#e9e8e8);border-radius:3px 3px 0 0;"></div>
<div class="a" style="left:732px;top:97px;width:1172px;height:2px;background:#c5622b;"></div>
<div class="t" style="left:745.0px;top:79.0px;font-size:13px;line-height:13px;color:#333;font-weight:normal;letter-spacing:0.229px;">Goods reception item</div>
<div class="t" style="left:1127.2px;width:600px;text-align:right;top:78.4px;font-size:12.5px;line-height:12.5px;color:#333;font-weight:normal;letter-spacing:0.154px;">SSA/325287 - 1</div>
<div class="a" style="left:1739px;top:74px;width:163px;height:21px;background:#d6d6d6;border-radius:11px;"></div>
<div class="t" style="left:1747.0px;top:78.8px;font-size:12px;line-height:12px;color:#333;font-weight:normal;letter-spacing:0.158px;">Pending supplier invoice</div>
<div class="a" style="left:1882.5px;top:75.5px;width:17px;height:17px;background:#1f87e6;border-radius:50%;"></div>
<div class="t" style="left:1591.0px;width:600px;text-align:center;top:79.2px;font-size:11px;line-height:11px;color:#fff;font-weight:bold;">3</div>
<div class="a" style="left:759px;top:112px;width:132px;height:56px;background:#e1e1e1;border:1px solid #c6c6c6;"></div>
<div class="a" style="left:761px;top:114px;width:6px;height:52px;background:#1f87e6;"></div>
<div class="t" style="left:773.0px;top:122.3px;font-size:11.5px;line-height:11.5px;color:#222;font-weight:normal;-webkit-text-stroke:0.35px #222;letter-spacing:0.262px;">Goods reception</div>
<div class="t" style="left:773.0px;top:136.7px;font-size:11px;line-height:11px;color:#222;font-weight:normal;-webkit-text-stroke:0.35px #222;letter-spacing:0.023px;">SSA/325287-1</div>
<div class="t" style="left:287.0px;width:600px;text-align:right;top:154.7px;font-size:11px;line-height:11px;color:#222;font-weight:bold;">1</div>
<div class="a" style="left:893px;top:140px;width:21px;height:2px;border-top:2px dashed #999;"></div>
<div class="a" style="left:914px;top:112px;width:132px;height:56px;border:2px dotted #777;background:#fff;"></div>
<div class="t" style="left:928.0px;top:122.7px;font-size:11px;line-height:11px;color:#222;font-weight:normal;letter-spacing:0.056px;">Supplier invoi...</div>
<div class="t" style="left:928.0px;top:136.7px;font-size:11px;line-height:11px;color:#222;font-weight:normal;letter-spacing:0.159px;">SIN/..</div>
<div class="a" style="left:1887px;top:156px;width:15px;height:15px;background:#ececec;"></div>
<svg class="a" style="left:1889px;top:158px;" width="11" height="11" viewBox="0 0 11 11"><path d="M2,2.5 L5.5,5.5 L9,2.5 M2,6 L5.5,9 L9,6" fill="none" stroke="#555" stroke-width="1.3"/></svg>
<div class="a" style="left:738px;top:177px;width:569px;height:133px;border:1px solid #e4e4e4;border-radius:3px;background:#fff;"></div>
<div class="a" style="left:738px;top:177px;width:569px;height:26px;background:linear-gradient(#f8f8f8,#e9e8e8);border-radius:3px 3px 0 0;"></div>
<div class="a" style="left:738px;top:203px;width:569px;height:2px;background:#c5622b;"></div>
<div class="t" style="left:751.0px;top:185.0px;font-size:13px;line-height:13px;color:#222;font-weight:normal;-webkit-text-stroke:0.15px #222;letter-spacing:0.146px;">Reception</div>
<div class="t" style="left:751.0px;top:213.8px;font-size:12px;line-height:12px;color:#666;font-weight:normal;letter-spacing:0.259px;">Quantity</div>
<div class="t" style="left:751.0px;top:233.0px;font-size:13px;line-height:13px;color:#222;font-weight:normal;-webkit-text-stroke:0.2px #222;letter-spacing:-0.417px;">1 pcs</div>
<div class="a" style="left:751px;top:250px;width:173px;height:1px;background:#a9a9a9;"></div>
<div class="t" style="left:936.0px;top:213.8px;font-size:12px;line-height:12px;color:#666;font-weight:normal;letter-spacing:0.087px;">Stock quantity</div>
<div class="t" style="left:936.0px;top:233.0px;font-size:13px;line-height:13px;color:#222;font-weight:normal;-webkit-text-stroke:0.2px #222;letter-spacing:-0.417px;">1 pcs</div>
<div class="a" style="left:936px;top:250px;width:173px;height:1px;background:#a9a9a9;"></div>
<div class="t" style="left:1122.0px;top:213.8px;font-size:12px;line-height:12px;color:#666;font-weight:normal;letter-spacing:-0.107px;">Reserved quantity</div>
<div class="a" style="left:1122px;top:250px;width:173px;height:1px;border-top:1px dashed #b8b8b8;"></div>
<div class="a" style="left:1032px;top:270px;width:15px;height:17px;border:1.5px solid #8f8f8f;border-radius:3px;background:#fff;"></div>
<div class="t" style="left:1054.0px;top:272.8px;font-size:12px;line-height:12px;color:#666;font-weight:normal;letter-spacing:-0.061px;">Require serial number to receive</div>
<div class="a" style="left:738px;top:317px;width:569px;height:263px;border:1px solid #e4e4e4;border-radius:3px;background:#fff;"></div>
<div class="a" style="left:738px;top:317px;width:569px;height:26px;background:linear-gradient(#f8f8f8,#e9e8e8);border-radius:3px 3px 0 0;"></div>
<div class="a" style="left:738px;top:343px;width:569px;height:2px;background:#c5622b;"></div>
<div class="t" style="left:751.0px;top:325.0px;font-size:13px;line-height:13px;color:#222;font-weight:normal;-webkit-text-stroke:0.15px #222;"></div>
<div class="t" style="left:751.0px;top:373.0px;font-size:13px;line-height:13px;color:#222;font-weight:normal;">11209 Utleie 1</div>
<svg class="a" style="left:1277px;top:375px;" width="11" height="8" viewBox="0 0 11 8"><path d="M0.5,0.5 H10.5 L5.5,7.5 Z" fill="#111"/></svg>
<div class="a" style="left:751px;top:390px;width:544px;height:1px;background:#a9a9a9;"></div>
<div class="t" style="left:751.0px;top:394.8px;font-size:12px;line-height:12px;color:#666;font-weight:normal;letter-spacing:0.078px;">Description</div>
<div class="t" style="left:751.0px;top:414.0px;font-size:13px;line-height:13px;color:#222;font-weight:normal;-webkit-text-stroke:0.2px #222;letter-spacing:0.032px;">Utleie 1</div>
<div class="a" style="left:751px;top:431px;width:532px;height:1px;background:#a9a9a9;"></div>
<div class="t" style="left:751.0px;top:443.8px;font-size:12px;line-height:12px;color:#666;font-weight:normal;letter-spacing:-0.002px;">Product revision</div>
<div class="a" style="left:751px;top:480px;width:358px;height:1px;background:#a9a9a9;"></div>
<div class="t" style="left:1122.0px;top:443.8px;font-size:12px;line-height:12px;color:#666;font-weight:normal;letter-spacing:0.094px;">Heat number</div>
<div class="a" style="left:1122px;top:480px;width:173px;height:1px;border-top:1px dashed #b8b8b8;"></div>
<div class="t" style="left:751.0px;top:493.8px;font-size:12px;line-height:12px;color:#666;font-weight:normal;letter-spacing:-0.171px;">Type</div>
<div class="t" style="left:751.0px;top:513.0px;font-size:13px;line-height:13px;color:#222;font-weight:normal;-webkit-text-stroke:0.2px #222;letter-spacing:0.167px;">P - Part</div>
<div class="a" style="left:751px;top:530px;width:173px;height:1px;background:#a9a9a9;"></div>
<div class="t" style="left:1030.0px;top:493.8px;font-size:12px;line-height:12px;color:#666;font-weight:normal;">name</div>
<div class="a" style="left:936px;top:530px;width:173px;height:1px;border-top:1px dashed #b8b8b8;"></div>
<div class="t" style="left:1122.0px;top:493.8px;font-size:12px;line-height:12px;color:#666;font-weight:normal;letter-spacing:0.187px;">Production lot</div>
<div class="a" style="left:1122px;top:530px;width:173px;height:1px;border-top:1px dashed #b8b8b8;"></div>
<div class="t" style="left:751.0px;top:542.8px;font-size:12px;line-height:12px;color:#666;font-weight:normal;">Equivalent product</div>
<div class="t" style="left:1030.0px;top:542.8px;font-size:12px;line-height:12px;color:#666;font-weight:normal;">code</div>
<div class="t" style="left:1030.0px;top:562.0px;font-size:13px;line-height:13px;color:#9a9a9a;font-weight:normal;">okup</div>
<svg class="a" style="left:1092px;top:564px;" width="11" height="8" viewBox="0 0 11 8"><path d="M0.5,0.5 H10.5 L5.5,7.5 Z" fill="#111"/></svg>
<div class="t" style="left:1122.0px;top:542.8px;font-size:12px;line-height:12px;color:#666;font-weight:normal;letter-spacing:0.096px;">Production date</div>
<div class="t" style="left:1122.0px;top:562.0px;font-size:13px;line-height:13px;color:#9a9a9a;font-weight:normal;letter-spacing:0.158px;">yyyy.MM.dd</div>
<svg class="a" style="left:1275px;top:560px;" width="13" height="14" viewBox="0 0 13 14"><rect x="0.8" y="2" width="11.4" height="11" fill="none" stroke="#222" stroke-width="1.4"/><rect x="0.8" y="2" width="11.4" height="2.5" fill="#222"/><rect x="3" y="0" width="1.5" height="3" fill="#222"/><rect x="8.5" y="0" width="1.5" height="3" fill="#222"/><rect x="7" y="8" width="3" height="3" fill="#222"/></svg>
<div class="a" style="left:1298px;top:566px;width:14px;height:14px;background:#ececec;"></div>
<svg class="a" style="left:1300px;top:568px;" width="10" height="10" viewBox="0 0 10 10"><path d="M2,2 L5,5 L8,2 M2,5.5 L5,8.5 L8,5.5" fill="none" stroke="#666" stroke-width="1.2"/></svg>
<div class="a" style="left:1328px;top:177px;width:570px;height:133px;border:1px solid #e4e4e4;border-radius:3px;background:#fff;"></div>
<div class="a" style="left:1328px;top:177px;width:570px;height:26px;background:linear-gradient(#f8f8f8,#e9e8e8);border-radius:3px 3px 0 0;"></div>
<div class="a" style="left:1328px;top:203px;width:570px;height:2px;background:#c5622b;"></div>
<div class="t" style="left:1341.0px;top:185.0px;font-size:13px;line-height:13px;color:#222;font-weight:normal;-webkit-text-stroke:0.15px #222;letter-spacing:-0.091px;">Finance</div>
<div class="t" style="left:1341.0px;top:213.8px;font-size:12px;line-height:12px;color:#666;font-weight:normal;letter-spacing:0.200px;">Not invoiced quantity</div>
<div class="t" style="left:1341.0px;top:233.0px;font-size:13px;line-height:13px;color:#222;font-weight:normal;-webkit-text-stroke:0.2px #222;letter-spacing:-0.417px;">1 pcs</div>
<div class="a" style="left:1341px;top:250px;width:272px;height:1px;background:#a9a9a9;"></div>
<div class="t" style="left:1625.0px;top:212.8px;font-size:12px;line-height:12px;color:#666;font-weight:normal;letter-spacing:-0.152px;">Stock accrual</div>
<div class="a" style="left:1624px;top:232px;width:20px;height:20px;background:#3f8f8f;border-radius:50%;"></div>
<div class="t" style="left:1334.0px;width:600px;text-align:center;top:237.3px;font-size:11.5px;line-height:11.5px;color:#fff;font-weight:bold;">4</div>
<div class="t" style="left:1649.0px;top:235.0px;font-size:13px;line-height:13px;color:#222;font-weight:normal;letter-spacing:-0.119px;">PAT/117748</div>
<svg class="a" style="left:1722px;top:234px;" width="13" height="13" viewBox="0 0 13 13"><path d="M5.5,2 H1 V12 H11 V7.5" fill="none" stroke="#222" stroke-width="1.5"/><path d="M5,8 L11.5,1.5 M7.5,1 H12 V5.5" fill="none" stroke="#222" stroke-width="1.6"/></svg>
<div class="a" style="left:1328px;top:317px;width:570px;height:263px;border:1px solid #e4e4e4;border-radius:3px;background:#fff;"></div>
<div class="a" style="left:1328px;top:317px;width:570px;height:26px;background:linear-gradient(#f8f8f8,#e9e8e8);border-radius:3px 3px 0 0;"></div>
<div class="a" style="left:1328px;top:343px;width:570px;height:2px;background:#c5622b;"></div>
<div class="t" style="left:1341.0px;top:325.0px;font-size:13px;line-height:13px;color:#222;font-weight:normal;-webkit-text-stroke:0.15px #222;letter-spacing:-0.004px;">Price</div>
<div class="t" style="left:1341.0px;top:353.8px;font-size:12px;line-height:12px;color:#666;font-weight:normal;letter-spacing:-0.090px;">Net price/EUR</div>
<div class="t" style="left:1341.0px;top:373.0px;font-size:13px;line-height:13px;color:#222;font-weight:normal;-webkit-text-stroke:0.2px #222;letter-spacing:-0.500px;">1.00</div>
<div class="a" style="left:1341px;top:390px;width:265px;height:1px;background:#a9a9a9;"></div>
<div class="t" style="left:1619.0px;top:353.8px;font-size:12px;line-height:12px;color:#666;font-weight:normal;letter-spacing:0.008px;">Net amount/EUR</div>
<div class="t" style="left:1619.0px;top:373.0px;font-size:13px;line-height:13px;color:#222;font-weight:normal;-webkit-text-stroke:0.2px #222;letter-spacing:-0.500px;">1.00</div>
<div class="a" style="left:1619px;top:390px;width:265px;height:1px;background:#a9a9a9;"></div>
<div class="t" style="left:1341.0px;top:402.8px;font-size:12px;line-height:12px;color:#666;font-weight:normal;letter-spacing:-0.181px;">Freight/EUR</div>
<div class="a" style="left:1341px;top:439px;width:265px;height:1px;border-top:1px dashed #b8b8b8;"></div>
<div class="t" style="left:1619.0px;top:402.8px;font-size:12px;line-height:12px;color:#666;font-weight:normal;letter-spacing:-0.028px;">Freight amount/EUR</div>
<div class="a" style="left:1619px;top:439px;width:265px;height:1px;background:#a9a9a9;"></div>
<div class="t" style="left:1341.0px;top:451.8px;font-size:12px;line-height:12px;color:#666;font-weight:normal;letter-spacing:0.036px;">Freight percent</div>
<div class="a" style="left:1341px;top:488px;width:265px;height:1px;border-top:1px dashed #b8b8b8;"></div>
<div class="t" style="left:1619.0px;top:451.8px;font-size:12px;line-height:12px;color:#666;font-weight:normal;letter-spacing:-0.086px;">Landed cost amount/EUR</div>
<div class="t" style="left:1619.0px;top:471.0px;font-size:13px;line-height:13px;color:#222;font-weight:normal;-webkit-text-stroke:0.2px #222;letter-spacing:-0.500px;">1.00</div>
<div class="a" style="left:1619px;top:488px;width:265px;height:1px;background:#a9a9a9;"></div>
<div class="t" style="left:1341.0px;top:500.8px;font-size:12px;line-height:12px;color:#666;font-weight:normal;letter-spacing:-0.204px;">Landed cost/EUR</div>
<div class="t" style="left:1341.0px;top:520.0px;font-size:13px;line-height:13px;color:#222;font-weight:normal;-webkit-text-stroke:0.2px #222;letter-spacing:-0.500px;">1.00</div>
<div class="a" style="left:1341px;top:537px;width:265px;height:1px;background:#a9a9a9;"></div>
<div class="a" style="left:738px;top:613px;width:1160px;height:427px;border:1px solid #9c9c9c;border-top:none;border-radius:0 0 3px 3px;background:#fff;"></div>
<div class="a" style="left:738px;top:613px;width:1160px;height:2px;background:#c5622b;"></div>
<div class="a" style="left:738px;top:587px;width:56px;height:29px;background:#fff;border:1px solid #cfcfcf;border-bottom:none;border-radius:3px 3px 0 0;"></div>
<div class="t" style="left:750.0px;top:596.0px;font-size:13px;line-height:13px;color:#333;font-weight:normal;letter-spacing:0.110px;">Notes</div>
<div class="a" style="left:794px;top:587px;width:166px;height:27px;background:linear-gradient(#f7f7f7,#e8e8e8);border:1px solid #d0d0d0;border-bottom:none;border-radius:3px 3px 0 0;"></div>
<div class="t" style="left:804.0px;top:596.0px;font-size:13px;line-height:13px;color:#333;font-weight:normal;">Accounting</div>
<div class="a" style="left:960px;top:587px;width:96px;height:27px;background:linear-gradient(#f7f7f7,#e8e8e8);border:1px solid #d0d0d0;border-bottom:none;border-radius:3px 3px 0 0;"></div>
<div class="a" style="left:1056px;top:587px;width:119px;height:27px;background:linear-gradient(#f7f7f7,#e8e8e8);border:1px solid #d0d0d0;border-bottom:none;border-radius:3px 3px 0 0;"></div>
<div class="t" style="left:1066.0px;top:596.0px;font-size:13px;line-height:13px;color:#333;font-weight:normal;letter-spacing:-0.044px;">Stock corrections</div>
<div class="a" style="left:1175px;top:587px;width:96px;height:27px;background:linear-gradient(#f7f7f7,#e8e8e8);border:1px solid #d0d0d0;border-bottom:none;border-radius:3px 3px 0 0;"></div>
<div class="t" style="left:1185.0px;top:596.0px;font-size:13px;line-height:13px;color:#333;font-weight:normal;letter-spacing:-0.043px;">Stock takings</div>
<div class="a" style="left:1271px;top:587px;width:111px;height:27px;background:linear-gradient(#f7f7f7,#e8e8e8);border:1px solid #d0d0d0;border-bottom:none;border-radius:3px 3px 0 0;"></div>
<div class="t" style="left:1281.0px;top:596.0px;font-size:13px;line-height:13px;color:#333;font-weight:normal;letter-spacing:-0.091px;">Goods transfers</div>
<div class="a" style="left:1382px;top:587px;width:100px;height:27px;background:linear-gradient(#f7f7f7,#e8e8e8);border:1px solid #d0d0d0;border-bottom:none;border-radius:3px 3px 0 0;"></div>
<div class="t" style="left:1392.0px;top:596.0px;font-size:13px;line-height:13px;color:#333;font-weight:normal;letter-spacing:0.030px;">Custom fields</div>
<div class="t" style="left:446.0px;width:600px;text-align:right;top:596.0px;font-size:13px;line-height:13px;color:#333;font-weight:normal;">nts</div>
<div class="t" style="left:1328.0px;top:628.8px;font-size:12px;line-height:12px;color:#666;font-weight:normal;letter-spacing:-0.035px;">Suppliers reference number</div>
<div class="a" style="left:1328px;top:665px;width:350px;height:1px;border-top:1px dashed #b8b8b8;"></div>
<div class="t" style="left:1328.0px;top:677.8px;font-size:12px;line-height:12px;color:#666;font-weight:normal;letter-spacing:0.216px;">Note from supplier</div>
<div class="a" style="left:1328px;top:691px;width:350px;height:92px;border:1px solid #a8a8a8;border-radius:3px;"></div>
<svg class="a" style="left:1668px;top:773px;" width="8" height="8" viewBox="0 0 8 8"><path d="M7,1 L1,7 M7,4 L4,7" stroke="#777" stroke-width="0.9"/></svg>
<div class="a" style="left:744px;top:997px;width:569px;height:32px;background:linear-gradient(#f4f4f4,#e7e7e7);"></div>
<div class="a" style="left:747px;top:1000px;width:155px;height:28px;background:#e6e6e6;border-radius:3px;"></div>
<svg class="a" style="left:758px;top:1007px;" width="12" height="12" viewBox="0 0 12 12"><path d="M6,0.5 V11.5 M0.5,6 H11.5" stroke="#222" stroke-width="2.4"/></svg>
<div class="t" style="left:775.0px;top:1008.0px;font-size:13px;line-height:13px;color:#333;font-weight:normal;letter-spacing:0.232px;">Add info notification</div>
<div class="a" style="left:677px;top:261px;width:163px;height:118px;background:#efefef;box-shadow:2px 3px 5px rgba(0,0,0,0.28);border:1px solid #d8d8d8;"></div>
<div class="a" style="left:678px;top:263px;width:161px;height:28px;background:#fff;"></div>
<svg class="a" style="left:687px;top:271px;" width="11" height="12" viewBox="0 0 11 12"><rect x="0.6" y="0.6" width="9.8" height="10.8" fill="none" stroke="#333" stroke-width="1.2"/><path d="M5.5,0.6 V11.4" stroke="#333" stroke-width="1.2"/></svg>
<div class="t" style="left:702.0px;top:272.0px;font-size:13px;line-height:13px;color:#333;font-weight:normal;letter-spacing:-0.082px;">Columns</div>
<svg class="a" style="left:821px;top:273px;" width="6" height="9" viewBox="0 0 6 9"><path d="M0.5,0.5 L5.5,4.5 L0.5,8.5 Z" fill="#222"/></svg>
<svg class="a" style="left:687px;top:300px;" width="11" height="14" viewBox="0 0 11 14"><path d="M0.6,0.6 H7 L10.4,4 V13.4 H0.6 Z" fill="none" stroke="#444" stroke-width="1"/><path d="M3,7 L7,11.5 M7,7 L3,11.5" stroke="#444" stroke-width="1"/></svg>
<div class="t" style="left:702.0px;top:301.0px;font-size:13px;line-height:13px;color:#333;font-weight:normal;letter-spacing:-0.291px;">Export To Excel</div>
<svg class="a" style="left:688px;top:331px;" width="10" height="10" viewBox="0 0 10 10"><path d="M2.2,2.8 A4,4 0 1 0 5,1" fill="none" stroke="#444" stroke-width="1.4"/><path d="M0.5,0.5 L3.8,0.8 L2.5,3.8 Z" fill="#444"/></svg>
<div class="t" style="left:702.0px;top:330.0px;font-size:13px;line-height:13px;color:#333;font-weight:normal;letter-spacing:-0.146px;">Reset To Default View</div>
<svg class="a" style="left:686px;top:359px;" width="12" height="12" viewBox="0 0 12 12"><path d="M6,0.3 L7.7,4.2 L11.8,4.5 L8.7,7.2 L9.6,11.3 L6,9.1 L2.4,11.3 L3.3,7.2 L0.2,4.5 L4.3,4.2 Z" fill="#222"/></svg>
<div class="t" style="left:702.0px;top:359.0px;font-size:13px;line-height:13px;color:#333;font-weight:normal;letter-spacing:0.036px;">Include custom fields</div>
<div class="a" style="left:839px;top:261px;width:194px;height:702px;background:#f3f3f3;border:1px solid #cfcfcf;box-shadow:1px 2px 3px rgba(0,0,0,0.18);"></div>
<div class="a" style="left:856px;top:269px;width:13px;height:13px;background:#1a73e8;border-radius:2px;"></div>
<svg class="a" style="left:856px;top:269px;" width="13" height="13" viewBox="0 0 13 13"><path d="M2.6,6.6 L5.3,9.3 L10.6,3.6" fill="none" stroke="#fff" stroke-width="1.9"/></svg>
<div class="t" style="left:872.0px;top:271.0px;font-size:13px;line-height:13px;color:#3a3a3a;font-weight:normal;letter-spacing:-0.483px;">St</div>
<div class="a" style="left:856px;top:297px;width:13px;height:13px;background:#fff;border:1px solid #777;border-radius:2px;"></div>
<div class="t" style="left:872.0px;top:299.0px;font-size:13px;line-height:13px;color:#3a3a3a;font-weight:normal;letter-spacing:0.459px;">Id</div>
<div class="a" style="left:856px;top:325px;width:13px;height:13px;background:#1a73e8;border-radius:2px;"></div>
<svg class="a" style="left:856px;top:325px;" width="13" height="13" viewBox="0 0 13 13"><path d="M2.6,6.6 L5.3,9.3 L10.6,3.6" fill="none" stroke="#fff" stroke-width="1.9"/></svg>
<div class="t" style="left:872.0px;top:327.0px;font-size:13px;line-height:13px;color:#3a3a3a;font-weight:normal;letter-spacing:0.340px;">Item</div>
<div class="a" style="left:856px;top:353px;width:13px;height:13px;background:#fff;border:1px solid #777;border-radius:2px;"></div>
<div class="t" style="left:872.0px;top:355.0px;font-size:13px;line-height:13px;color:#3a3a3a;font-weight:normal;letter-spacing:-0.044px;">Created at</div>
<div class="a" style="left:856px;top:381px;width:13px;height:13px;background:#1a73e8;border-radius:2px;"></div>
<svg class="a" style="left:856px;top:381px;" width="13" height="13" viewBox="0 0 13 13"><path d="M2.6,6.6 L5.3,9.3 L10.6,3.6" fill="none" stroke="#fff" stroke-width="1.9"/></svg>
<div class="t" style="left:872.0px;top:383.0px;font-size:13px;line-height:13px;color:#3a3a3a;font-weight:normal;letter-spacing:0.198px;">Quantity</div>
<div class="a" style="left:856px;top:409px;width:13px;height:13px;background:#fff;border:1px solid #777;border-radius:2px;"></div>
<div class="t" style="left:872.0px;top:411.0px;font-size:13px;line-height:13px;color:#3a3a3a;font-weight:normal;letter-spacing:0.181px;">Not invoiced quantity</div>
<div class="a" style="left:856px;top:437px;width:13px;height:13px;background:#1a73e8;border-radius:2px;"></div>
<svg class="a" style="left:856px;top:437px;" width="13" height="13" viewBox="0 0 13 13"><path d="M2.6,6.6 L5.3,9.3 L10.6,3.6" fill="none" stroke="#fff" stroke-width="1.9"/></svg>
<div class="t" style="left:872.0px;top:439.0px;font-size:13px;line-height:13px;color:#3a3a3a;font-weight:normal;letter-spacing:-0.021px;">Stock qty</div>
<div class="a" style="left:856px;top:465px;width:13px;height:13px;background:#fff;border:1px solid #777;border-radius:2px;"></div>
<div class="t" style="left:872.0px;top:467.0px;font-size:13px;line-height:13px;color:#3a3a3a;font-weight:normal;letter-spacing:0.036px;">Available qty</div>
<div class="a" style="left:856px;top:493px;width:13px;height:13px;background:#1a73e8;border-radius:2px;"></div>
<svg class="a" style="left:856px;top:493px;" width="13" height="13" viewBox="0 0 13 13"><path d="M2.6,6.6 L5.3,9.3 L10.6,3.6" fill="none" stroke="#fff" stroke-width="1.9"/></svg>
<div class="t" style="left:872.0px;top:495.0px;font-size:13px;line-height:13px;color:#3a3a3a;font-weight:normal;letter-spacing:-0.294px;">Type</div>
<div class="a" style="left:856px;top:521px;width:13px;height:13px;background:#1a73e8;border-radius:2px;"></div>
<svg class="a" style="left:856px;top:521px;" width="13" height="13" viewBox="0 0 13 13"><path d="M2.6,6.6 L5.3,9.3 L10.6,3.6" fill="none" stroke="#fff" stroke-width="1.9"/></svg>
<div class="t" style="left:872.0px;top:523.0px;font-size:13px;line-height:13px;color:#3a3a3a;font-weight:normal;letter-spacing:0.083px;">Product</div>
<div class="a" style="left:856px;top:548px;width:13px;height:13px;background:#fff;border:1px solid #777;border-radius:2px;"></div>
<div class="t" style="left:872.0px;top:550.0px;font-size:13px;line-height:13px;color:#3a3a3a;font-weight:normal;letter-spacing:-0.027px;">Product revision</div>
<div class="a" style="left:856px;top:576px;width:13px;height:13px;background:#fff;border:1px solid #777;border-radius:2px;"></div>
<div class="t" style="left:872.0px;top:578.0px;font-size:13px;line-height:13px;color:#3a3a3a;font-weight:normal;letter-spacing:0.102px;">Manufacturers product</div>
<div class="a" style="left:856px;top:604px;width:13px;height:13px;background:#fff;border:1px solid #777;border-radius:2px;"></div>
<div class="t" style="left:872.0px;top:606.0px;font-size:13px;line-height:13px;color:#3a3a3a;font-weight:normal;letter-spacing:0.110px;">Production date</div>
<div class="a" style="left:856px;top:632px;width:13px;height:13px;background:#1a73e8;border-radius:2px;"></div>
<svg class="a" style="left:856px;top:632px;" width="13" height="13" viewBox="0 0 13 13"><path d="M2.6,6.6 L5.3,9.3 L10.6,3.6" fill="none" stroke="#fff" stroke-width="1.9"/></svg>
<div class="t" style="left:872.0px;top:634.0px;font-size:13px;line-height:13px;color:#3a3a3a;font-weight:normal;letter-spacing:-0.112px;">Assignments</div>
<div class="a" style="left:856px;top:660px;width:13px;height:13px;background:#fff;border:1px solid #777;border-radius:2px;"></div>
<div class="t" style="left:872.0px;top:662.0px;font-size:13px;line-height:13px;color:#3a3a3a;font-weight:normal;letter-spacing:-0.055px;">Structure</div>
<div class="a" style="left:856px;top:688px;width:13px;height:13px;background:#fff;border:1px solid #777;border-radius:2px;"></div>
<div class="t" style="left:872.0px;top:690.0px;font-size:13px;line-height:13px;color:#3a3a3a;font-weight:normal;letter-spacing:-0.033px;">Best before date</div>
<div class="a" style="left:856px;top:716px;width:13px;height:13px;background:#fff;border:1px solid #777;border-radius:2px;"></div>
<div class="t" style="left:872.0px;top:718.0px;font-size:13px;line-height:13px;color:#3a3a3a;font-weight:normal;letter-spacing:0.129px;">Supplier product</div>
<div class="a" style="left:856px;top:744px;width:13px;height:13px;background:#fff;border:1px solid #777;border-radius:2px;"></div>
<div class="t" style="left:872.0px;top:746.0px;font-size:13px;line-height:13px;color:#3a3a3a;font-weight:normal;letter-spacing:-0.085px;">Suppliers ref. no</div>
<div class="a" style="left:856px;top:772px;width:13px;height:13px;background:#fff;border:1px solid #777;border-radius:2px;"></div>
<div class="t" style="left:872.0px;top:774.0px;font-size:13px;line-height:13px;color:#3a3a3a;font-weight:normal;letter-spacing:0.232px;">Production lot</div>
<div class="a" style="left:856px;top:800px;width:13px;height:13px;background:#fff;border:1px solid #777;border-radius:2px;"></div>
<div class="t" style="left:872.0px;top:802.0px;font-size:13px;line-height:13px;color:#3a3a3a;font-weight:normal;letter-spacing:0.076px;">Heat number</div>
<div class="a" style="left:856px;top:828px;width:13px;height:13px;background:#1a73e8;border-radius:2px;"></div>
<svg class="a" style="left:856px;top:828px;" width="13" height="13" viewBox="0 0 13 13"><path d="M2.6,6.6 L5.3,9.3 L10.6,3.6" fill="none" stroke="#fff" stroke-width="1.9"/></svg>
<div class="t" style="left:872.0px;top:830.0px;font-size:13px;line-height:13px;color:#3a3a3a;font-weight:normal;letter-spacing:0.160px;">Net price</div>
<div class="a" style="left:856px;top:856px;width:13px;height:13px;background:#fff;border:1px solid #777;border-radius:2px;"></div>
<div class="t" style="left:872.0px;top:858.0px;font-size:13px;line-height:13px;color:#3a3a3a;font-weight:normal;letter-spacing:0.168px;">Net amt.</div>
<div class="a" style="left:856px;top:884px;width:13px;height:13px;background:#1a73e8;border-radius:2px;"></div>
<svg class="a" style="left:856px;top:884px;" width="13" height="13" viewBox="0 0 13 13"><path d="M2.6,6.6 L5.3,9.3 L10.6,3.6" fill="none" stroke="#fff" stroke-width="1.9"/></svg>
<div class="t" style="left:872.0px;top:886.0px;font-size:13px;line-height:13px;color:#3a3a3a;font-weight:normal;letter-spacing:-0.173px;">Cur</div>
<div class="a" style="left:856px;top:912px;width:13px;height:13px;background:#fff;border:1px solid #777;border-radius:2px;"></div>
<div class="t" style="left:872.0px;top:914.0px;font-size:13px;line-height:13px;color:#3a3a3a;font-weight:normal;letter-spacing:0.248px;">Highlighted notification</div>
<div class="a" style="left:856px;top:940px;width:13px;height:13px;background:#fff;border:1px solid #777;border-radius:2px;"></div>
<div class="t" style="left:872.0px;top:942.0px;font-size:13px;line-height:13px;color:#3a3a3a;font-weight:normal;letter-spacing:0.140px;">Inspect production</div>
</body></html>
